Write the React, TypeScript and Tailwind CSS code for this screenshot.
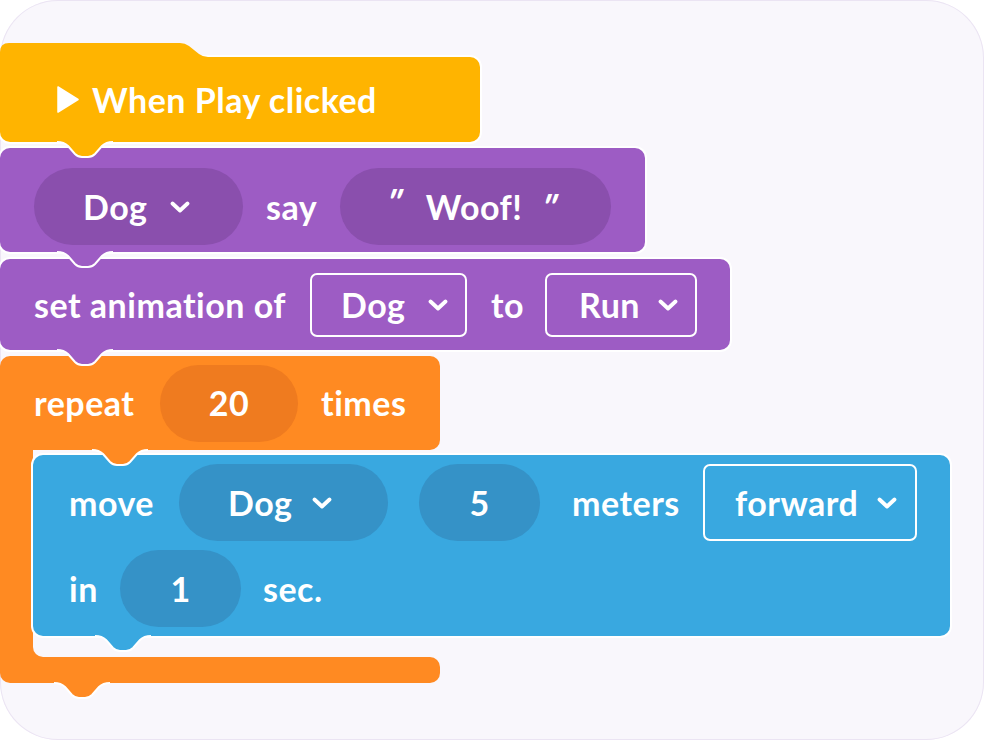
import React from "react";

function Chevron() {
  return (
    <svg width="20" height="12" viewBox="0 0 20 12" className="shrink-0">
      <polyline points="2.5,2.5 10,9.5 17.5,2.5" fill="none" stroke="white" strokeWidth="3.8" strokeLinecap="round" strokeLinejoin="round" />
    </svg>
  );
}

function Tab({ pos, fill }: { pos: string; fill: string }) {
  return (
    <svg width="56" height="18" viewBox="0 0 56 18" className={`absolute top-[calc(100%-1px)] z-10 ${pos}`}>
      <path d="M0 1 Q7 1 11 5 L18 13 Q21 16 25 16 L31 16 Q35 16 38 13 L45 5 Q49 1 56 1 L56 0 L0 0 Z" className={fill} />
      <path d="M0 1 Q7 1 11 5 L18 13 Q21 16 25 16 L31 16 Q35 16 38 13 L45 5 Q49 1 56 1" fill="none" stroke="white" strokeWidth="2" />
    </svg>
  );
}

function Quote() {
  return <span className="inline-block -skew-x-[20deg] text-[36px] leading-none -mt-[12px]">"</span>;
}

export default function App() {
  return (
    <div className="w-[984px] h-[740px] bg-white">
      <div className="w-full h-full rounded-[58px] bg-[#f9f7fc] shadow-[inset_0_0_0_1px_#ebe4f3] pt-[57px] flex flex-col items-start font-['Lato','Noto_Sans',sans-serif] font-bold text-white text-[34px] tracking-[0.5px] leading-none">
        {/* Hat block */}
        <div className="relative w-[480px] h-[85px] bg-[#ffb400] rounded-[10px] rounded-tl-none ring-2 ring-white flex items-center pl-[57px] gap-[13px]">
          <svg width="210" height="16" viewBox="0 0 210 16" className="absolute bottom-[calc(100%-2px)] left-0">
            <path d="M0 16 L0 9 Q0 0 9 0 L180 0 Q185 0 189 3 L199 11 Q203 14 208 14 L210 14 L210 16 Z" fill="#ffb400" />
          </svg>
          <svg width="22" height="27" viewBox="0 0 22 27" className="shrink-0">
            <path d="M1 1 L21 13.5 L1 26 Z" fill="white" stroke="white" strokeWidth="1.5" strokeLinejoin="round" />
          </svg>
          <span>When Play clicked</span>
          <Tab pos="left-[57px]" fill="fill-[#ffb400]" />
        </div>

        {/* say block */}
        <div className="relative mt-[6px] w-[645px] h-[104px] bg-[#9d5cc4] rounded-[10px] ring-2 ring-white flex items-start pt-[20px] pl-[34px]">
          <div className="flex items-center">
            <div className="w-[209px] h-[77px] rounded-full bg-[#8a4fad] flex items-center pl-[49px] pr-[53px]">
              <span>Dog</span>
              <span className="ml-auto"><Chevron /></span>
            </div>
            <span className="ml-[23px] w-[50px] whitespace-nowrap">say</span>
            <div className="ml-[24px] w-[271px] h-[77px] rounded-full bg-[#8a4fad] flex items-center pl-[47px]">
              <Quote />
              <span className="ml-[24px]">Woof!</span>
              <span className="ml-[20px]"><Quote /></span>
            </div>
          </div>
          <Tab pos="left-[57px]" fill="fill-[#9d5cc4]" />
        </div>

        {/* set animation block */}
        <div className="relative mt-[7px] w-[730px] h-[91px] bg-[#9d5cc4] rounded-[10px] ring-2 ring-white flex items-center pl-[34px]">
          <div className="flex items-center">
            <span className="w-[253px] whitespace-nowrap">set animation of</span>
            <div className="ml-[23px] w-[157px] h-[64px] rounded-[7px] border-2 border-white flex items-center pl-[29px] pr-[17px]">
              <span>Dog</span>
              <span className="ml-auto"><Chevron /></span>
            </div>
            <span className="ml-[24px] w-[30px] whitespace-nowrap">to</span>
            <div className="ml-[24px] w-[152px] h-[64px] rounded-[7px] border-2 border-white flex items-center pl-[32px] pr-[17px]">
              <span>Run</span>
              <span className="ml-auto"><Chevron /></span>
            </div>
          </div>
          <Tab pos="left-[57px]" fill="fill-[#9d5cc4]" />
        </div>

        {/* repeat block */}
        <div className="relative mt-[6px] flex flex-col items-start">
          <div className="relative w-[440px] h-[94px] bg-[#ff8a22] rounded-[10px] rounded-bl-none flex items-center pl-[34px]">
            <span className="w-[102px] whitespace-nowrap">repeat</span>
            <div className="ml-[24px] w-[138px] h-[77px] rounded-full bg-[#ef7b1f] flex items-center justify-center">20</div>
            <span className="ml-[23px] whitespace-nowrap">times</span>
            <Tab pos="left-[92px]" fill="fill-[#ff8a22]" />
          </div>
          <div className="flex items-start">
            <div className="w-[33px] self-stretch bg-[#ff8a22]" />
            <div className="relative mt-[5px] mb-[21px] w-[917px] h-[181px] bg-[#39a8e0] rounded-[10px] ring-2 ring-white flex flex-col justify-center gap-[9px] pl-[36px]">
              <div className="flex items-center">
                <span className="w-[86px] whitespace-nowrap">move</span>
                <div className="ml-[24px] w-[209px] h-[77px] rounded-full bg-[#3592c7] flex items-center pl-[49px] pr-[56px]">
                  <span>Dog</span>
                  <span className="ml-auto"><Chevron /></span>
                </div>
                <div className="ml-[31px] w-[121px] h-[77px] rounded-full bg-[#3592c7] flex items-center justify-center">5</div>
                <span className="ml-[32px] w-[107px] whitespace-nowrap">meters</span>
                <div className="ml-[24px] w-[214px] h-[77px] rounded-[7px] border-2 border-white flex items-center pl-[30px] pr-[18px]">
                  <span>forward</span>
                  <span className="ml-auto"><Chevron /></span>
                </div>
              </div>
              <div className="flex items-center">
                <span className="w-[26px] whitespace-nowrap">in</span>
                <div className="ml-[25px] w-[121px] h-[77px] rounded-full bg-[#3592c7] flex items-center justify-center">1</div>
                <span className="ml-[22px] whitespace-nowrap">sec.</span>
              </div>
              <Tab pos="left-[62px]" fill="fill-[#39a8e0]" />
            </div>
          </div>
          <div className="relative w-[440px] h-[26px] bg-[#ff8a22] rounded-[10px] rounded-tl-none">
            <div className="absolute left-[33px] bottom-full w-[10px] h-[10px] bg-[#ff8a22]">
              <div className="w-full h-full bg-[#f9f7fc] rounded-bl-[10px]" />
            </div>
            <Tab pos="left-[54px]" fill="fill-[#ff8a22]" />
          </div>
        </div>
      </div>
    </div>
  );
}
